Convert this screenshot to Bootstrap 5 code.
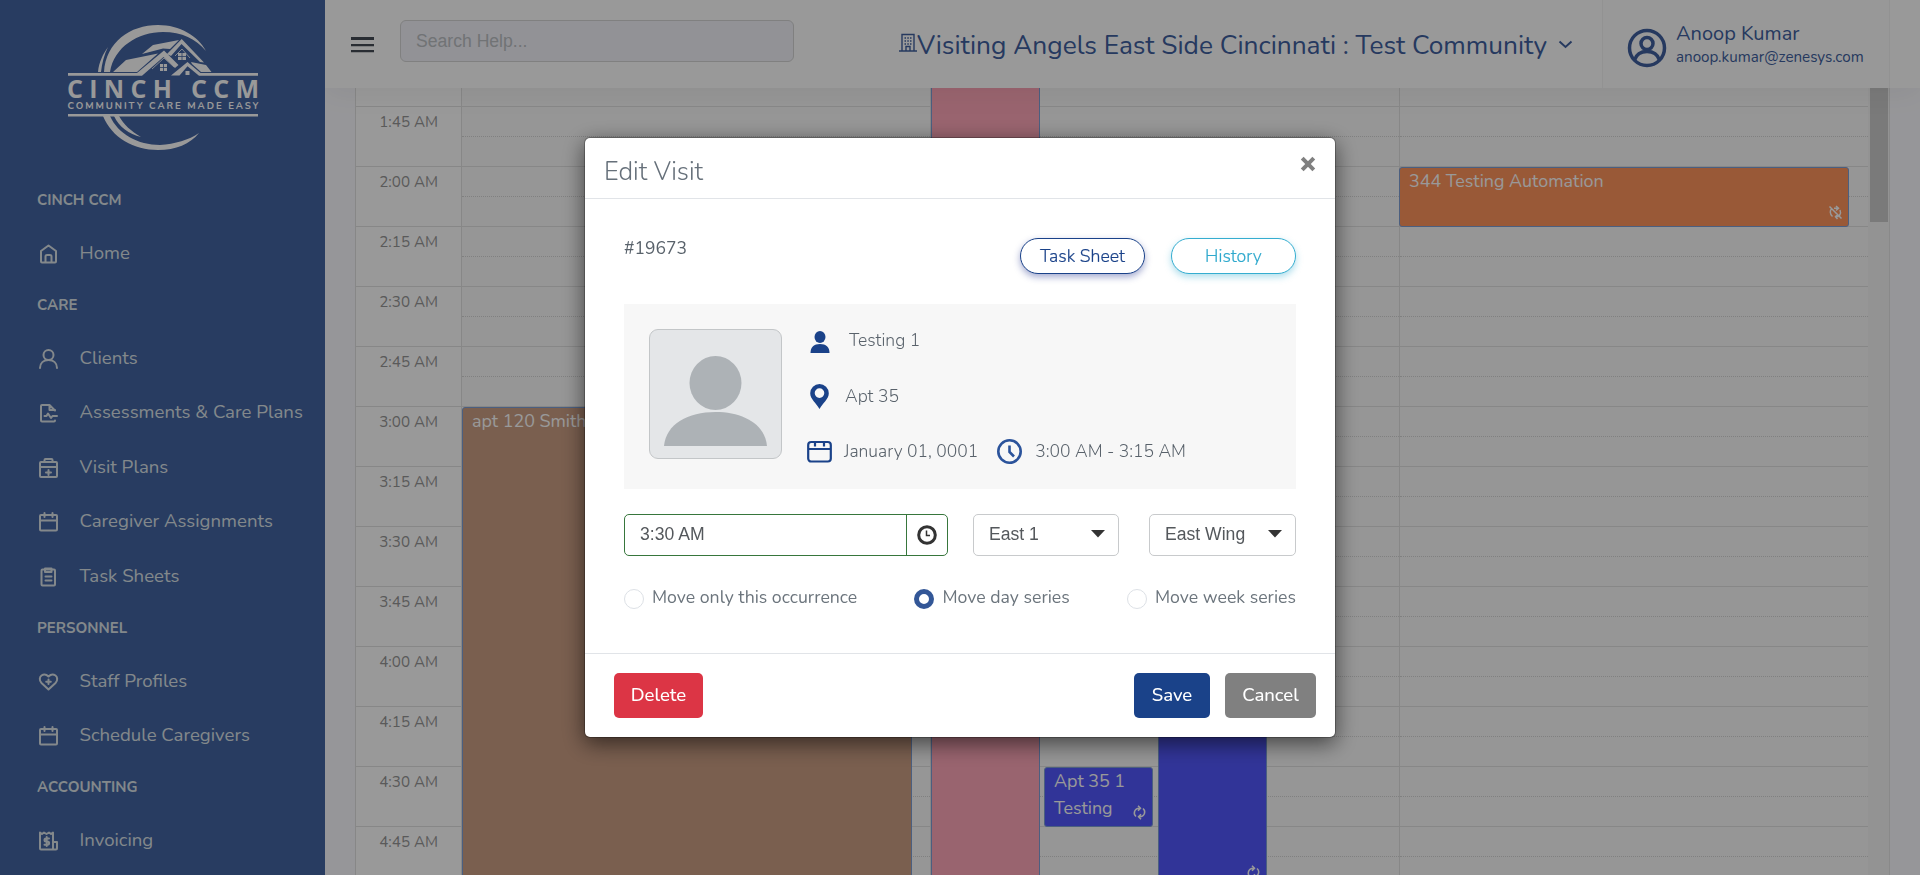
<!DOCTYPE html>
<html lang="en">
<head>
<meta charset="utf-8">
<meta name="viewport" content="width=device-width, initial-scale=1">
<title>Cinch CCM - Schedule</title>
<link href="https://cdn.jsdelivr.net/npm/bootstrap@5.3.0/dist/css/bootstrap.min.css" rel="stylesheet">
<style>
  body { font-family: Nunito, Lato, sans-serif; font-size: 17.6px; color: #6c757d; background: #fbfbff; height: 100vh; overflow: hidden; }
  svg { display: block; flex: none; }

  /* sidebar */
  .side { width: 325px; background: #4464a2; color: #dbe3e8; }
  .side-logo { height: 176px; }
  .side-head { height: 47.5px; margin-bottom: 3px; padding-left: 37px; font-size: 15px; font-weight: 700; display: flex; align-items: center; }
  .side-link { height: 54.5px; padding-left: 37px; gap: 20.5px; color: inherit; font-size: 18.6px; display: flex; align-items: center; white-space: nowrap; padding-top: 0; padding-bottom: 0; }
  .ico { fill: none; stroke: currentColor; stroke-width: 2; stroke-linecap: round; stroke-linejoin: round; }

  /* top bar */
  .topbar { height: 88px; background: #fff; color: #40609f; box-shadow: 0 4px 30px rgba(0,0,0,.06); z-index: 2; position: relative; }
  .search-box { width: 394px; height: 42px; margin: 20px 0 0 25px; background: #f3f4fb; border-color: #d5d5d5; font-family: "Liberation Sans", sans-serif; font-size: 17.6px; padding-left: 15px; }
  .search-box::placeholder { color: #bcc0c4; opacity: 1; }
  .community { font-size: 26.3px; line-height: 1; white-space: nowrap; }
  .user-box { width: 288px; background: #fdfdfd; border: solid #f4f4f4; border-width: 0 1px; padding-left: 24px; }
  .user-name { font-size: 20px; line-height: 24px; }
  .user-mail { font-size: 15.2px; line-height: 22px; }

  /* schedule grid */
  .sched { margin-left: 30px; border-left: 1px solid #e1e1e1; }
  .axis { width: 106px; background: #fff; border-right: 1px solid #e1e1e1; color: #969696; font-size: 15.2px; }
  .slot { height: 60px; border-top: 1px solid #e1e1e1; padding: 4px 23px 0 0; text-align: right; }
  .cut { height: 18px; flex: none; }
  .day { background: #fafafa; border-right: 1px solid #e1e1e1; }
  .day:last-child { border-right: 0; }
  .cell { height: 60px; border-top: 1px solid #e1e1e1; }
  .cell::before { content: ""; display: block; height: 30px; border-bottom: 1px dotted #d6d6d6; }
  .ev { position: absolute; border: 1px solid #7d9fd6; border-radius: 3px; color: #fff; padding: 0 9px; line-height: 27px; font-size: 17.9px; overflow: hidden; }
  .ev svg { position: absolute; right: 5px; bottom: 6px; }
  .ev-brown { left: 0; width: 450px; top: 319px; height: 800px; background: #cb9e84; }
  .ev-pink { left: 0; width: 109px; top: -20px; height: 900px; background: #ffa7b9; }
  .ev-apt { left: 113px; width: 109px; top: 679px; height: 60px; background: #5358fd; }
  .ev-blue { left: 227px; width: 109px; top: 500px; height: 299px; background: #5358fd; }
  .ev-orange { left: -1px; width: 450px; top: 79px; height: 60px; background: #ff945d; }
  .track { width: 21px; background: #f5f5f5; padding: 0 1.5px 0 2px; }
  .thumb { height: 134px; background: #cbcbcb; }
  .gutter { width: 31px; border-left: 1px solid #e4e4e4; }

  /* dialog */
  .modal-backdrop.show { opacity: .4; }
  .modal { --bs-modal-width: 752px; }
  .modal-dialog { margin: 137px auto 0; }
  .modal-content { height: 601px; border-radius: 6px; border-color: rgba(0,0,0,.25); box-shadow: 0 6px 21px rgba(0,0,0,.55); background-clip: padding-box; color: #6c757d; }
  .modal-header { height: 61px; flex: none; padding: 5px 19px 0; border-color: #e1e4e8; }
  .modal-title { font-size: 25.4px; font-weight: 300; color: #66707a; padding-top: 4px; }
  .modal-body { padding: 39px 39px 0; }
  .modal-footer { height: 84px; flex: none; padding: 0 19px 0 29px; border-color: #e1e4e8; }
  .btn-pill { width: 125px; height: 36px; padding: 0; border-radius: 18px; font-weight: 300; font-size: 17.7px; line-height: 34px; background: #fff; }
  .pill-navy { color: #1a4289; border-color: #1a4289; box-shadow: 0 3px 7px rgba(26,42,137,.4); -webkit-text-stroke: .2px; }
  .pill-aqua { color: #2fa9cd; border-color: #35add0; box-shadow: 0 3px 7px rgba(53,173,208,.4); -webkit-text-stroke: .2px; }
  .visit-panel { height: 185px; margin-top: 30px; padding: 25px; background: #f7f7f7; font-weight: 300; font-size: 17.5px; color: #59626b; }
  .avatar { width: 133px; height: 130px; border: 1px solid #c3c6c8; border-radius: 9px; background: #e4e6e8; overflow: hidden; }
  .facts { margin-left: 25px; }
  .fact { height: 55.5px; display: flex; }
  .field { height: 42px; border: 1px solid #c8cacc; border-radius: 5px; font-family: "Liberation Sans", sans-serif; font-size: 17.6px; color: #54585c; padding: 0 13px 2px 15px; display: flex; align-items: center; justify-content: space-between; }
  .field-time { width: 324px; border-color: #37763c; padding-right: 0; }
  .clock-btn { width: 41px; height: 40px; margin-top: 2px; border-left: 1px solid #37763c; display: grid; place-items: center; }
  .move-opt { display: flex; line-height: 20px; white-space: nowrap; font-size: 17.7px; }
  .dot { width: 20px; height: 20px; border: 1px solid #dde1e6; border-radius: 50%; margin: 2px 8px 0 0; }
  .dot-on { border: 5.5px solid #335797; }
  .btn-foot { height: 45px; padding: 0; font-size: 18.5px; font-weight: 500; border: 0; border-radius: 5px; color: #fff; margin: 0; }
</style>
</head>
<body>
<div class="d-flex h-100">
  <nav class="side flex-shrink-0 nav flex-column flex-nowrap overflow-hidden">
    <div class="side-logo flex-shrink-0">
      <svg width="325" height="175" viewBox="0 0 325 175" fill="#fff">
        <path d="M104 72C106 42 130 25 158 25c22 0 40 11 48 26-10-12-24-19-43-19-25 0-49 15-53 40zM98 72c1-10 5-18 10-25-4 8-6 16-7 25zM103 116h7c8 18 28 29 50 29 15-1 29-5 39-12-9 11-23 17-41 17-24 0-46-12-55-34zM114 116h5c5 9 12 15 22 21-12-3-22-10-27-21z"/>
        <path d="M68 73h69l27-22.500 14.500 14.500-3.500 3-11.500-11L142 75.800H68zM113 72l13-12 32-6.500L137 72zM142 54l11-9 26-5-9 9-7-.5zM167 54l14.700-15L204 62.500l-4-.5-18.500-18L171 56zM191 62l15 3 5.500 7H201l-9-8zM171 75.500L187.500 62l13 11H258v2.800h-59l-11.500-9.500-8 9.200zM68 114h190v2.600H68z"/>
        <path d="M160 64h7v7h-7zM178 53h8v7h-8zM185.500 71h4v4h-4z"/>
        <path d="M163.500 64v7M160 67.500h7M182 53v7M178 56.500h8" stroke="#4464a2" stroke-width=".8"/>
        <path d="M152 69l12-11 10 9M175 56l7-7 8 9" fill="none" stroke="#fff" stroke-width=".8"/>
        <text x="67" y="98" font-family="Open Sans, sans-serif" font-size="25" font-weight="700" textLength="192">CINCH CCM</text>
        <text x="67.500" y="108.800" font-family="Nunito, sans-serif" font-size="9.600" font-weight="700" textLength="191">COMMUNITY CARE MADE EASY</text>
      </svg>
    </div>
    <div class="side-head">CINCH CCM</div>
    <a class="nav-link side-link"><svg class="ico" width="22" height="22" viewBox="0 0 22 22"><path d="M4 8L11.500 2.500 19 8V18.500a1 1 0 0 1-1 1H5a1 1 0 0 1-1-1zM8.500 19v-5.500a1.500 1.500 0 0 1 1.500-1.500h3a1.500 1.500 0 0 1 1.500 1.500V19"/></svg>Home</a>
    <div class="side-head">CARE</div>
    <a class="nav-link side-link"><svg class="ico" width="22" height="22" viewBox="0 0 22 22"><circle cx="11.500" cy="7" r="5"/><path d="M3 20c0-5 3.500-8 8.500-8s8.500 3 8.500 8"/></svg>Clients</a>
    <a class="nav-link side-link"><svg class="ico" width="22" height="22" viewBox="0 0 22 22"><path d="M18 8.500L12.500 3H5a1 1 0 0 0-1 1v14.500a1 1 0 0 0 1 1h12a1 1 0 0 0 1-1M12.500 3v5H18M7.500 14h2l1.500-2.500 3 4.500 1.500-2H20"/></svg><span>Assessments &amp; Care Plans</span></a>
    <a class="nav-link side-link"><svg class="ico" width="22" height="22" viewBox="0 0 22 22"><rect x="3" y="5" width="17" height="15" rx="1"/><path d="M7.500 4.500V3a1 1 0 0 1 1-1h6a1 1 0 0 1 1 1v1.500M3 10h17M11.500 13v5M9 15.500h5"/></svg>Visit Plans</a>
    <a class="nav-link side-link"><svg class="ico" width="22" height="22" viewBox="0 0 22 22"><rect x="3" y="4" width="17" height="15.500" rx="1"/><path d="M7.500 2v4M15.500 2v4M3 9.500h17"/></svg>Caregiver Assignments</a>
    <a class="nav-link side-link"><svg class="ico" width="22" height="22" viewBox="0 0 22 22"><rect x="4.500" y="3.500" width="13.500" height="16" rx="1"/><path d="M8 6V2.500h6.500V6zM8.500 10.500h6M8.500 14.500h6"/></svg>Task Sheets</a>
    <div class="side-head">PERSONNEL</div>
    <a class="nav-link side-link"><svg class="ico" width="22" height="22" viewBox="0 0 22 22"><path d="M11.500 18.500L4.500 12C2 9.500 2.500 6 4.500 4.500c2.300-1.500 5-1 7 1 2-2 4.700-2.500 7-1C20.500 6 21 9.500 18.500 12zM11.500 8.500v4.500M9.200 10.700h4.600"/></svg>Staff Profiles</a>
    <a class="nav-link side-link"><svg class="ico" width="22" height="22" viewBox="0 0 22 22"><rect x="3" y="4" width="17" height="15.500" rx="1"/><path d="M7.500 2v4M15.500 2v4M3 9.500h17"/></svg>Schedule Caregivers</a>
    <div class="side-head">ACCOUNTING</div>
    <a class="nav-link side-link"><svg class="ico" width="22" height="22" viewBox="0 0 22 22"><path d="M3 2.500l2 1.500 2-1.500L9.500 4l2.500-1.500L14 4l2-1.500v17H4a1 1 0 0 1-1-1zM16 12h4v6.500a1 1 0 0 1-1 1h-3M12 8.500H9a1.300 1.300 0 0 0 0 3h1.500a1.300 1.300 0 0 1 0 3.200h-3M9.700 7v9"/></svg>Invoicing</a>
  </nav>

  <main class="flex-grow-1 d-flex flex-column overflow-hidden">
    <header class="topbar d-flex flex-shrink-0">
      <svg class="align-self-start" width="24" height="20" viewBox="0 0 24 20" style="margin:35px 0 0 26px" fill="#454c56"><path d="M0 2h23v3H0zM0 9h23v2.300H0zM0 15h23v2.300H0z"/></svg>
      <input class="form-control search-box" type="text" placeholder="Search Help...">
      <div class="community d-flex ms-auto" style="padding:32px 29px 0 0">
        <svg width="18" height="19" viewBox="0 0 18 19" style="margin-top:1px" fill="none" stroke="currentColor" stroke-width="1.400"><path d="M3 17.500V1.500h12v16M0 18h18M7 17.500v-4h4v4"/><path d="M5.500 5h1.500M8.300 5h1.500M11 5h1.500M5.500 8h1.500M8.300 8h1.500M11 8h1.500M5.500 11h1.500M8.300 11h1.500M11 11h1.500" stroke-width="1.500"/></svg>
        <span>Visiting Angels East Side Cincinnati : Test Community</span>
        <svg width="15" height="10" viewBox="0 0 15 10" style="margin:8px 0 0 11px" fill="none" stroke="currentColor" stroke-width="2"><path d="M1.500 1.500l6 5.500 6-5.500"/></svg>
      </div>
      <div class="user-box d-flex">
        <svg width="40" height="40" viewBox="0 0 40 40" style="margin:28px 9px 0 0" fill="none" stroke="currentColor" stroke-width="3.500"><circle cx="20" cy="20" r="17.500"/><circle cx="20" cy="15.500" r="6"/><path d="M7.500 32c2-6 6.500-8.500 12.500-8.500S30.500 26 32.500 32"/></svg>
        <div style="padding-top:22px"><div class="user-name">Anoop Kumar</div><div class="user-mail">anoop.kumar@zenesys.com</div></div>
      </div>
      <div style="width:30px"></div>
    </header>

    <div class="d-flex flex-grow-1 overflow-hidden">
      <div class="sched d-flex flex-grow-1 overflow-hidden">
        <div class="axis flex-shrink-0">
          <div class="cut"></div>
          <div class="slot">1:45 AM</div><div class="slot">2:00 AM</div><div class="slot">2:15 AM</div><div class="slot">2:30 AM</div>
          <div class="slot">2:45 AM</div><div class="slot">3:00 AM</div><div class="slot">3:15 AM</div><div class="slot">3:30 AM</div>
          <div class="slot">3:45 AM</div><div class="slot">4:00 AM</div><div class="slot">4:15 AM</div><div class="slot">4:30 AM</div>
          <div class="slot">4:45 AM</div>
        </div>
        <div class="day position-relative" style="width:469px">
          <div class="cut"></div>
          <div class="cell"></div><div class="cell"></div><div class="cell"></div><div class="cell"></div><div class="cell"></div><div class="cell"></div><div class="cell"></div><div class="cell"></div><div class="cell"></div><div class="cell"></div><div class="cell"></div><div class="cell"></div><div class="cell"></div>
          <div class="ev ev-brown">apt 120 Smith</div>
        </div>
        <div class="day position-relative" style="width:469px">
          <div class="cut"></div>
          <div class="cell"></div><div class="cell"></div><div class="cell"></div><div class="cell"></div><div class="cell"></div><div class="cell"></div><div class="cell"></div><div class="cell"></div><div class="cell"></div><div class="cell"></div><div class="cell"></div><div class="cell"></div><div class="cell"></div>
          <div class="ev ev-pink"></div>
          <div class="ev ev-apt">Apt 35 1<br>Testing<svg width="15" height="15" viewBox="0 0 15 15" fill="none" stroke="#fff" stroke-width="1.500"><path d="M4 11.500C1 9 2 3.500 7.500 3.300M11 3.500c3 2.500 2 8-3.500 8.200M6 .8l2.500 2.500L6 5.800M9 9.200l-2.500 2.500L9 14.200"/></svg></div>
          <div class="ev ev-blue"><svg width="15" height="15" viewBox="0 0 15 15" fill="none" stroke="#fff" stroke-width="1.500"><path d="M4 11.500C1 9 2 3.500 7.500 3.300M11 3.500c3 2.500 2 8-3.500 8.200M6 .8l2.500 2.500L6 5.800M9 9.200l-2.500 2.500L9 14.200"/></svg></div>
        </div>
        <div class="day position-relative flex-grow-1">
          <div class="cut"></div>
          <div class="cell"></div><div class="cell"></div><div class="cell"></div><div class="cell"></div><div class="cell"></div><div class="cell"></div><div class="cell"></div><div class="cell"></div><div class="cell"></div><div class="cell"></div><div class="cell"></div><div class="cell"></div><div class="cell"></div>
          <div class="ev ev-orange">344 Testing Automation<svg width="15" height="15" viewBox="0 0 15 15" fill="none" stroke="#fff" stroke-width="1.500"><path d="M4.500 11.500C1.500 9 2 5 3.500 4M6 3.300h4M10.500 11.500H8M12 5c1 2 .5 4-.5 5.500M8 1l2.500 2.300L8 5.500M9.500 9.500L7.500 11.700 9.500 14M1.500 1.500l12 12"/></svg></div>
        </div>
      </div>
      <div class="track"><div class="thumb"></div></div>
      <div class="gutter flex-shrink-0"></div>
    </div>
  </main>
</div>

<div class="modal-backdrop show"></div>
<div class="modal show d-block overflow-hidden" tabindex="-1" role="dialog">
  <div class="modal-dialog">
    <div class="modal-content">
      <div class="modal-header">
        <h5 class="modal-title">Edit Visit</h5>
        <svg class="align-self-start" width="16" height="16" viewBox="0 0 16 16" style="margin-top:12.500px" stroke="#808080" stroke-width="4"><path d="M2.200 2.200l11.600 11.600M13.800 2.200L2.200 13.800"/></svg>
      </div>
      <div class="modal-body">
        <div class="d-flex">
          <div class="me-auto" style="line-height:20px;font-size:17.500px;color:#59626b">#19673</div>
          <button class="btn btn-pill pill-navy" style="margin-right:26px">Task Sheet</button>
          <button class="btn btn-pill pill-aqua">History</button>
        </div>
        <div class="visit-panel d-flex">
          <div class="avatar flex-shrink-0">
            <svg width="131" height="128" viewBox="0 0 131 128" fill="#adb2b6"><ellipse cx="65.500" cy="53" rx="26" ry="27"/><path d="M14 116c2-22 24-34 51.500-34S115 94 117 116z"/></svg>
          </div>
          <div class="facts" style="line-height:22px">
            <div class="fact"><svg width="25" height="24" viewBox="0 0 25 24" style="margin:2px 17px 0 0" fill="#1a4289"><ellipse cx="13" cy="6" rx="5.500" ry="6"/><path d="M3.500 22c0-6 3.500-9 9.500-9s9.500 3 9.500 9z"/></svg>Testing 1</div>
            <div class="fact"><svg width="25" height="27" viewBox="0 0 25 27" style="margin:-1px 13px 0 0" fill="#1a4289"><path fill-rule="evenodd" d="M12.500 0a9.300 9.300 0 0 0-9.300 9.300c0 6 6.300 10 9.300 15.700 3-5.700 9.300-9.700 9.300-15.700A9.300 9.300 0 0 0 12.500 0zm0 4.300a4.800 4.800 0 1 1 0 9.600 4.800 4.800 0 0 1 0-9.600z"/></svg>Apt 35</div>
            <div class="fact"><svg width="25" height="25" viewBox="0 0 25 25" style="margin:0 12px 0 0" fill="none" stroke="#1a4289" stroke-width="2.200"><rect x="1.200" y="2" width="22.600" height="19.500" rx="3"/><path d="M1 9h23M8 1.500v5M17 1.500v5"/></svg>January 01, 0001<svg width="25" height="25" viewBox="0 0 25 25" style="margin:-1px 13px 0 19px" fill="none" stroke="#2b539b" stroke-width="2.600"><circle cx="12.500" cy="12.500" r="11.200"/><path d="M12.500 6.500v6.500l4.500 4.500"/></svg>3:00 AM - 3:15 AM</div>
          </div>
        </div>
        <div class="d-flex" style="margin-top:25px">
          <div class="field field-time">3:30 AM<span class="clock-btn"><svg width="20" height="20" viewBox="0 0 20 20" fill="none" stroke="#333"><circle cx="10" cy="10" r="8.300" stroke-width="3"/><path d="M9.500 5.500v5h3.500" stroke-width="1.500"/></svg></span></div>
          <div class="field" style="width:146px;margin-left:25px">East 1<svg width="14" height="8" viewBox="0 0 14 8" fill="#333"><path d="M0 0h14L7 7.500z"/></svg></div>
          <div class="field" style="width:147px;margin-left:30px">East Wing<svg width="14" height="8" viewBox="0 0 14 8" fill="#333"><path d="M0 0h14L7 7.500z"/></svg></div>
        </div>
        <div class="d-flex justify-content-between" style="margin-top:31px">
          <div class="move-opt"><span class="dot"></span>Move only this occurrence</div>
          <div class="move-opt"><span class="dot dot-on"></span>Move day series</div>
          <div class="move-opt"><span class="dot"></span>Move week series</div>
        </div>
      </div>
      <div class="modal-footer">
        <button class="btn btn-danger btn-foot me-auto" style="width:89px">Delete</button>
        <button class="btn btn-foot" style="width:76px;margin-right:15px;background:#1a4289">Save</button>
        <button class="btn btn-foot" style="width:91px;background:#808080">Cancel</button>
      </div>
    </div>
  </div>
</div>
<script src="https://cdn.jsdelivr.net/npm/bootstrap@5.3.0/dist/js/bootstrap.bundle.min.js"></script>
</body>
</html>
